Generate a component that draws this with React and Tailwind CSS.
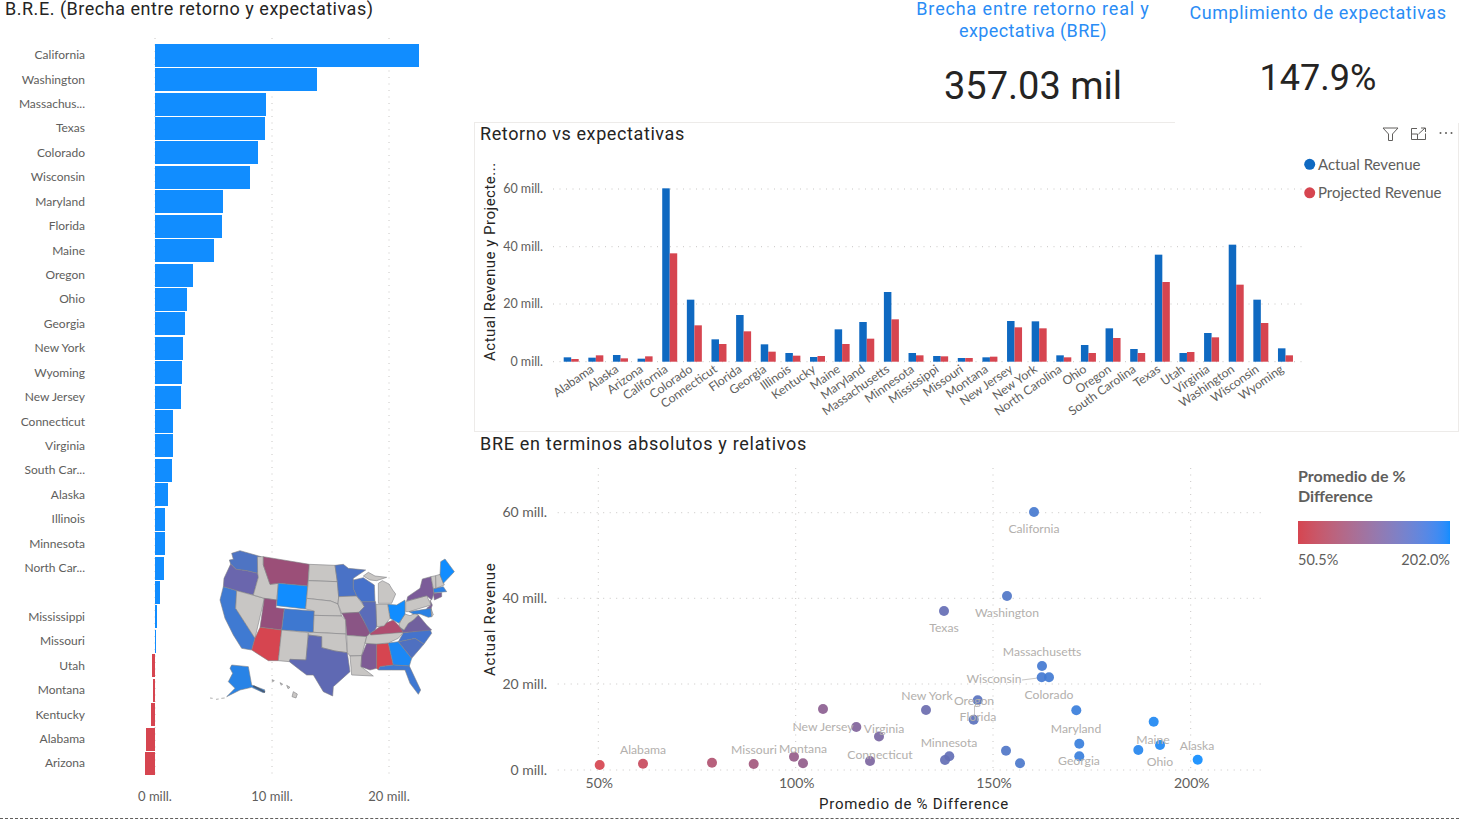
import React from "react";

const BLUE = "#118DFF";
const RED = "#D64550";
const NAVY = "#0F69C1";
const GREY = "#C8C6C4";

const lerp = (t) => {
  const c = [[214, 17], [69, 141], [80, 255]].map(([a, b]) => Math.round(a + (b - a) * t));
  return `rgb(${c[0]},${c[1]},${c[2]})`;
};

const bars = [
  ["California", 419], ["Washington", 317], ["Massachus...", 265.5], ["Texas", 265], ["Colorado", 258],
  ["Wisconsin", 250], ["Maryland", 222.5], ["Florida", 221.5], ["Maine", 214], ["Oregon", 193],
  ["Ohio", 187], ["Georgia", 185], ["New York", 183], ["Wyoming", 182], ["New Jersey", 181],
  ["Connecticut", 173], ["Virginia", 173], ["South Car...", 172], ["Alaska", 168], ["Illinois", 165],
  ["Minnesota", 164.5], ["North Car...", 164], ["", 160], ["Mississippi", 157], ["Missouri", 156],
  ["Utah", 152], ["Montana", 152.5], ["Kentucky", 151], ["Alabama", 145.5], ["Arizona", 145],
];

const columns = [
  [712, 717], [713, 706], [705, 715], [716, 709], [205, 400], [539, 616], [658, 672], [585, 634], [673, 695], [699, 707],
  [711, 708], [628, 672], [606, 656], [516, 598], [699, 706], [708, 709], [714, 714], [712, 710], [603, 622], [604, 625],
  [706, 712], [675, 699], [625, 654], [687, 699], [404, 486], [699, 696], [639, 652], [374, 494], [539, 609], [685, 706],
];

const columnLabels = [
  "Alabama", "Alaska", "Arizona", "California", "Colorado", "Connecticut", "Florida", "Georgia", "Illinois", "Kentucky",
  "Maine", "Maryland", "Massachusetts", "Minnesota", "Mississippi", "Missouri", "Montana", "New Jersey", "New York",
  "North Carolina", "Ohio", "Oregon", "South Carolina", "Texas", "Utah", "Virginia", "Washington", "Wisconsin", "Wyoming",
];

const dots = [
  [599.7, 765], [643, 763.7], [712, 762.7], [753.7, 764], [794, 756.7], [803, 763.3], [823, 709], [856.3, 727], [879, 736.5],
  [870, 761], [926, 710], [977.7, 700.3], [973.7, 719.7], [949.3, 756.3], [945, 760], [1006, 750.7], [1020, 763.3], [1042, 666],
  [1041.7, 677.3], [1049, 677.3], [1076.3, 710.3], [1079.3, 743.7], [1079.3, 756.3], [1153.7, 721.7], [1138.3, 750], [1160, 745],
  [1197.7, 759.7], [1034, 512], [1007, 596], [944, 611],
];

const dotLabels = [
  ["California", 1034, 528], ["Washington", 1007, 612], ["Texas", 944, 627], ["Massachusetts", 1042, 651], ["Wisconsin", 994, 678],
  ["Colorado", 1049, 694], ["New York", 927, 695], ["Oregon", 974, 700], ["Florida", 978, 716], ["New Jersey", 823, 726],
  ["Virginia", 884, 728], ["Maryland", 1076, 728], ["Alabama", 643, 749], ["Missouri", 754, 749], ["Montana", 803, 748],
  ["Minnesota", 949, 742], ["Connecticut", 880, 754], ["Maine", 1153, 739], ["Alaska", 1197, 745], ["Ohio", 1160, 761], ["Georgia", 1079, 760],
];

const states = [
  ["#4E74C3", "95,40 120,32 183,50 173,100 140,92 108,88 92,72 88,60 100,58"],
  ["#6A66AD", "92,72 108,88 140,92 173,100 175,112 160,165 110,152 70,140 72,115"],
  ["#3F7AD2", "70,140 110,152 107,205 165,295 155,330 125,325 100,285 75,235 60,180"],
  [GREY, "110,152 193,175 165,295 107,205"],
  [GREY, "172,50 190,50 190,75 210,133 235,130 230,180 193,175 160,165 175,112 173,100"],
  ["#9B4F78", "190,50 328,73 323,138 235,130 210,133 190,75"],
  [BLUE, "235,130 323,138 317,207 230,197"],
  ["#944F7C", "193,175 230,180 228,203 253,206 245,270 180,262"],
  ["#3E78D0", "253,206 343,213 340,277 245,270"],
  [RED, "180,262 245,270 235,362 205,362 155,330 165,295"],
  [GREY, "245,270 325,278 318,360 270,358 268,365 235,362"],
  [GREY, "328,73 405,76 412,125 325,122"],
  [GREY, "325,122 412,125 416,170 414,192 392,183 320,175"],
  [GREY, "320,175 392,183 414,192 425,228 342,226 343,213 317,207"],
  [GREY, "342,226 425,228 437,240 437,282 340,277"],
  [GREY, "325,278 340,277 437,282 442,338 405,333 365,323 365,290 325,285"],
  ["#5F69B3", "325,285 365,290 365,323 405,333 442,338 450,395 400,440 398,468 370,455 340,405 320,405 300,390 268,365 270,358 318,360"],
  ["#4A72C6", "405,76 430,73 445,85 497,90 460,115 460,145 470,168 416,170 412,125"],
  [GREY, "416,170 470,168 493,200 477,217 425,220 414,192"],
  ["#8A5585", "425,220 477,217 490,240 512,278 500,290 440,286 437,240"],
  [GREY, "440,286 500,290 485,347 450,348 442,338"],
  [GREY, "450,348 485,347 483,380 520,408 455,405"],
  ["#7E5B95", "500,310 530,312 530,385 510,390 483,380 485,347"],
  [RED, "530,312 565,309 580,375 540,380 535,390 530,385"],
  ["#1B88F5", "565,309 595,305 635,355 628,378 580,375"],
  ["#3F78D2", "535,390 540,380 580,375 628,378 662,450 655,463 630,430 615,390 575,390"],
  ["#4F70C0", "595,305 645,295 672,312 635,355"],
  ["#4473CC", "595,305 610,278 690,268 695,280 672,312 645,295"],
  [GREY, "500,290 512,278 610,277 595,295 565,309 530,312 495,310"],
  ["#AF4D6F", "510,280 525,270 555,250 580,240 600,260 610,277 512,285"],
  ["#71619E", "600,262 612,270 625,250 640,240 655,225 680,255 695,270 610,278"],
  [GREY, "597,255 603,240 615,222 630,227 645,220 655,225 640,240 625,250 612,270 600,262"],
  [BLUE, "563,193 590,195 615,180 615,222 597,250 570,235"],
  [GREY, "527,193 563,193 570,235 552,258 530,260"],
  ["#5A6CB9", "485,185 527,185 530,260 525,270 510,280 490,240 477,217 493,200"],
  ["#4671CA", "460,120 490,113 523,135 525,185 485,185 470,168 460,145"],
  [GREY, "535,130 547,122 567,132 578,150 587,162 575,190 535,190"],
  [GREY, "490,108 505,97 525,108 560,112 530,122 510,120"],
  [GREY, "617,185 680,167 693,195 627,215 617,215"],
  ["#7B5C99", "620,183 623,170 660,145 667,117 693,110 702,160 695,180 680,167"],
  ["#7A5C9A", "690,180 697,195 690,215 680,205 693,195"],
  ["#7B5B97", "700,160 725,158 725,170 703,180"],
  ["#2B81E6", "700,145 730,140 740,155 702,158"],
  [GREY, "693,110 707,107 708,145 700,146"],
  [GREY, "707,107 720,103 733,135 708,145"],
  [BLUE, "720,105 722,65 735,57 763,95 730,130"],
  ["#2A80E4", "627,215 693,205 695,230 685,232 660,222 640,222"],
  [GREY, "693,205 700,225 695,230"],
  ["#2883E6", "95,375 145,380 155,435 195,450 190,458 155,442 120,450 80,470 105,445 85,425 98,400 90,385"],
  [GREY, "280,455 292,462 288,474 276,470"],
  [GREY, "240,428 248,432 244,436"],
  [GREY, "260,436 270,442 264,446"],
  [GREY, "216,419 223,422 218,425"],
];

function UsMap() {
  return (
    <svg viewBox="0 0 810 510" className="absolute left-[200px] top-[540px] w-[270px] h-[170px] blur-[0.4px]">
      {states.map(([fill, points], i) => (
        <polygon key={i} points={points} fill={fill} stroke="#828184" strokeWidth="1.8" strokeLinejoin="round" />
      ))}
      <path d="M160 438 L195 457" stroke="#4A5A70" strokeWidth="5" fill="none" />
      <path d="M30 474 l8 1 M48 478 l8 -1 M64 475 l10 -1" stroke="#8A8A8A" strokeWidth="2" />
    </svg>
  );
}

function LeftChart() {
  return (
    <div className="relative w-[474px] shrink-0 h-full">
      <svg viewBox="0 0 474 818" className="absolute inset-0 w-[474px] h-[818px]">
        {[155, 272, 389].map((x) => (
          <line key={x} x1={x} x2={x} y1="38" y2="777" stroke="#C8C6C4" strokeDasharray="1 5.5" />
        ))}
        {[[155, "0 mill."], [272, "10 mill."], [389, "20 mill."]].map(([x, t]) => (
          <text key={x} x={x} y="801" textAnchor="middle" fill="#605E5C" className="text-[13px]">{t}</text>
        ))}
      </svg>
      <div className="relative h-[43px] pl-[5px] font-['Roboto',sans-serif] text-[18px] leading-[18px] tracking-[0.52px] text-[#252423] whitespace-nowrap">
        B.R.E. (Brecha entre retorno y expectativas)
      </div>
      <div className="relative flex flex-col">
        {bars.map(([name, end], i) => {
          const neg = end < 154.5;
          const w = Math.abs(end - 154.5);
          return (
            <div key={i} className="flex items-center h-[24.43px]">
              <div className="w-[86px] pr-px text-right text-[12px] leading-[14px] text-[#605E5C] whitespace-nowrap">{name}</div>
              <div className="w-[68.5px] shrink-0" />
              <div
                className={neg ? "h-[23px] bg-[#D64550]" : "h-[23px] bg-[#118DFF]"}
                style={{ width: w, marginLeft: neg ? -w : 0 }}
              />
            </div>
          );
        })}
      </div>
      <UsMap />
    </div>
  );
}

function CardIcons() {
  return (
    <svg viewBox="1380 125 76 20" className="w-[76px] h-[20px]" fill="none" stroke="#605E5C">
      <path d="M1383 130 H1398 L1392.5 136 V142.5 L1388.5 142.5 V136 Z" strokeWidth="1" strokeLinejoin="round" />
      <path d="M1417 130.5 H1411.5 V141.5 H1425.5 V135.5 M1411.5 136 H1417.5 V141.5 M1418.5 136 L1425 130 M1421 130 H1425.5 V134" strokeWidth="1" />
      <g fill="#605E5C" stroke="none">
        <circle cx="1440.5" cy="135" r="1" />
        <circle cx="1446" cy="135" r="1" />
        <circle cx="1451.5" cy="135" r="1" />
      </g>
    </svg>
  );
}

function ColumnChart() {
  const y = (z) => 120 + z / 3;
  const base = 361.7;
  return (
    <svg viewBox="475 147 983 283" className="w-[983px] h-[283px] block">
      {[[189, "60 mill."], [246.7, "40 mill."], [304, "20 mill."], [361.7, "0 mill."]].map(([gy, t]) => (
        <g key={t}>
          <line x1="553" x2="1302" y1={gy} y2={gy} stroke="#C8C6C4" strokeDasharray="1 5.5" />
          <text x="543" y={gy + 4} textAnchor="end" fill="#605E5C" className="text-[12.5px]">{t}</text>
        </g>
      ))}
      {columns.map(([a, b], i) => {
        const x = 563.7 + i * 24.63;
        return (
          <g key={i}>
            <rect x={x} y={y(a)} width="7.5" height={base - y(a)} fill={NAVY} />
            <rect x={x + 7.5} y={y(b)} width="7.5" height={base - y(b)} fill={RED} />
          </g>
        );
      })}
      {columnLabels.map((t, i) => {
        const x = 570.2 + (i + 1) * 24.63;
        return (
          <text key={t} x={x} y="371" textAnchor="end" fill="#605E5C" transform={`rotate(-35 ${x} 371)`} className="text-[12.2px]">{t}</text>
        );
      })}
      <text transform="translate(495 361) rotate(-90)" fill="#252423" className="text-[15px] font-['Roboto',sans-serif] tracking-[0.5px]">Actual Revenue y Projecte...</text>
      <circle cx="1309.7" cy="164.3" r="5.5" fill={NAVY} />
      <text x="1318" y="170" fill="#605E5C" className="text-[15px]">Actual Revenue</text>
      <circle cx="1309.7" cy="192.8" r="5.5" fill={RED} />
      <text x="1318" y="198" fill="#605E5C" className="text-[15px]">Projected Revenue</text>
    </svg>
  );
}

function ScatterChart() {
  return (
    <svg viewBox="475 456 821 362" className="w-[821px] h-[362px] block shrink-0">
      {[[512.7, "60 mill."], [598.3, "40 mill."], [684, "20 mill."], [770, "0 mill."]].map(([gy, t]) => (
        <g key={t}>
          <line x1="557.7" x2="1265" y1={gy} y2={gy} stroke="#C8C6C4" strokeDasharray="1 5.5" />
          <text x="547" y={gy + 4.5} textAnchor="end" fill="#605E5C" className="text-[14px]">{t}</text>
        </g>
      ))}
      {[[598.3, "50%"], [795.7, "100%"], [993, "150%"], [1190.7, "200%"]].map(([gx, t]) => (
        <g key={t}>
          <line x1={gx} x2={gx} y1="468" y2="770" stroke="#C8C6C4" strokeDasharray="1 5.5" />
          <text x={gx + 1} y="788" textAnchor="middle" fill="#605E5C" className="text-[14px]">{t}</text>
        </g>
      ))}
      <path d="M1022 680 L1038 678 M974.5 706 V716" stroke="#C8C6C4" fill="none" />
      {dots.map(([x, y], i) => (
        <circle key={i} cx={x} cy={y} r="5" fill={lerp((x - 599.7) / 598)} fillOpacity="0.92" />
      ))}
      {dotLabels.map(([t, x, y]) => (
        <text key={t} x={x} y={y + 5} textAnchor="middle" fill="#B3B0AD" className="text-[12.2px]">{t}</text>
      ))}
      <text transform="translate(495 676) rotate(-90)" fill="#252423" className="text-[15px] font-['Roboto',sans-serif] tracking-[0.75px]">Actual Revenue</text>
      <text x="914" y="809" textAnchor="middle" fill="#252423" className="text-[15px] font-['Roboto',sans-serif] tracking-[0.75px]">Promedio de % Difference</text>
    </svg>
  );
}

export default function App() {
  return (
    <div className="w-[1459px] h-[819px] flex bg-white border-b border-dashed border-[#605E5C] overflow-hidden font-['Lato',sans-serif]">
      <LeftChart />
      <div className="flex-1 flex flex-col min-w-0">
        <div className="h-[122px] flex justify-end font-['Roboto',sans-serif] text-center">
          <div className="w-[296px]">
            <div className="text-[18px] leading-[18px] tracking-[0.85px] text-[#2A8CF5]">Brecha entre retorno real y</div>
            <div className="mt-[4px] text-[18px] leading-[18px] tracking-[0.38px] text-[#2A8CF5]">expectativa (BRE)</div>
            <div className="mt-[23px] text-[38px] leading-[46px] text-[#252423]">357.03 mil</div>
          </div>
          <div className="w-[278px] pr-[4px]">
            <div className="mt-[2px] text-[18px] leading-[22px] tracking-[0.55px] text-[#2A8CF5] whitespace-nowrap">Cumplimiento de expectativas</div>
            <div className="mt-[32px] text-[36px] leading-[44px] text-[#252423]">147.9%</div>
          </div>
        </div>
        <div className="h-px w-[701px] bg-[#EDEBE9]" />
        <div className="h-[309px] border-l border-r border-b border-[#EDEBE9]">
          <div className="h-[24px] flex items-start justify-between pl-[5px] pr-[2px]">
            <div className="font-['Roboto',sans-serif] text-[18px] leading-[22px] tracking-[0.6px] text-[#252423]">Retorno vs expectativas</div>
            <CardIcons />
          </div>
          <ColumnChart />
        </div>
        <div className="flex-1 min-h-0 pl-px">
          <div className="h-[24px] flex items-start pl-[5px] font-['Roboto',sans-serif] text-[18px] leading-[24px] tracking-[0.7px] text-[#252423]">BRE en terminos absolutos y relativos</div>
          <div className="flex">
            <ScatterChart />
            <div className="w-[152px] ml-[2px] pt-[10px] text-[#605E5C]">
              <div className="text-[16px] leading-[20px] font-bold">Promedio de %<br />Difference</div>
              <div className="mt-[15px] h-[23px] bg-gradient-to-r from-[#D64550] to-[#118DFF]" />
              <div className="mt-[6px] flex justify-between text-[14.5px] leading-[20px]">
                <span>50.5%</span>
                <span>202.0%</span>
              </div>
            </div>
          </div>
        </div>
      </div>
    </div>
  );
}
